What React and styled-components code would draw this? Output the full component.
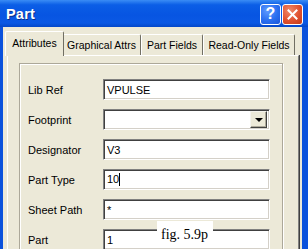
import React from 'react'
import styled, { createGlobalStyle } from 'styled-components'

const GlobalStyle = createGlobalStyle`
  html, body {
    margin: 0;
    padding: 0;
    background: #fff;
  }
  body {
    width: 308px;
    height: 249px;
    overflow: hidden;
    font-family: "Liberation Sans", Arial, sans-serif;
  }
`

const Window = styled.div`
  position: relative;
  width: 308px;
  height: 249px;
  display: flex;
  flex-direction: column;
  overflow: hidden;
`

const TitleBar = styled.div`
  height: 27px;
  flex: none;
  display: flex;
  align-items: center;
  justify-content: space-between;
  padding: 0 5px 0 6px;
  background: linear-gradient(180deg, #3a8cf5 0%, #0b5ee6 18%, #0755e2 55%, #0a58e4 85%, #0447c8 100%);
  color: #fff;
`

const Title = styled.span`
  font-weight: 700;
  font-size: 14.5px;
  text-shadow: 1px 1px 0 #0a2f8a;
  letter-spacing: 0.2px;
`

const Controls = styled.div`
  display: flex;
  gap: 1px;
  margin-top: 1px;
`

const CtrlButton = styled.div`
  width: 21px;
  height: 21px;
  box-sizing: border-box;
  border: 1px solid #fff;
  border-radius: 3px;
  display: flex;
  align-items: center;
  justify-content: center;
  color: #fff;
  font-weight: 700;
  font-size: 16px;
  background: ${(p) =>
    p.$close
      ? 'radial-gradient(circle at 35% 30%, #f08a6a 0%, #e0512f 55%, #c23a18 100%)'
      : 'radial-gradient(circle at 35% 30%, #5f9bff 0%, #2a6ff0 55%, #1a55d8 100%)'};
`

const Body = styled.div`
  flex: 1;
  display: flex;
  flex-direction: column;
  background: #ece9d8;
  border-left: 3px solid #0b52dc;
  border-right: 6px solid #0b52dc;
  padding: 4px 2px 0 4px;
  min-height: 0;
`

const TabStrip = styled.div`
  display: flex;
  align-items: flex-end;
  height: 24px;
  flex: none;
  position: relative;
  z-index: 1;
`

const Tab = styled.div`
  box-sizing: border-box;
  width: ${(p) => p.$w}px;
  height: ${(p) => (p.$active ? 25 : 21)}px;
  margin: ${(p) => (p.$active ? '0 -2px -1px -2px' : '0')};
  padding-top: ${(p) => (p.$active ? 5 : 4)}px;
  background: #ece9d8;
  border-top: 1px solid #fff;
  border-left: 1px solid #fff;
  border-right: 1px solid #716f64;
  border-top-left-radius: 2px;
  border-top-right-radius: 2px;
  font-size: 10.5px;
  line-height: 13px;
  color: #000;
  text-align: center;
  white-space: nowrap;
  position: relative;
  z-index: ${(p) => (p.$active ? 2 : 1)};
`

const Panel = styled.div`
  flex: 1;
  border-top: 1px solid #fff;
  border-left: 1px solid #fff;
  border-right: 1px solid #808080;
  box-shadow: 1px 0 0 #404040;
  margin-right: 1px;
  padding: 7px 15px 0 11px;
  min-height: 0;
`

const Group = styled.div`
  border: 1px solid #aca899;
  box-shadow: inset 1px 1px 0 #fff, 1px 1px 0 #fff;
  border-bottom: none;
  height: 100%;
  box-sizing: border-box;
  padding: 15px 12px 0 8px;
  display: grid;
  grid-auto-rows: 21px;
  row-gap: 9px;
  align-content: start;
`

const Row = styled.div`
  display: grid;
  grid-template-columns: 75px 1fr;
  align-items: center;
`

const Label = styled.span`
  font-size: 11px;
  color: #000;
`

const Field = styled.div`
  height: 21px;
  box-sizing: border-box;
  background: #fff;
  border-top: 1px solid #808080;
  border-left: 1px solid #808080;
  border-bottom: 1px solid #fff;
  border-right: 1px solid #fff;
  box-shadow: inset 1px 1px 0 #404040, inset -1px -1px 0 #d4d0c8;
  padding: 0 2px 0 3px;
  display: flex;
  align-items: center;
  justify-content: space-between;
  font-size: 11px;
  color: #000;
`

const Caret = styled.span`
  display: inline-block;
  width: 1px;
  height: 13px;
  background: #000;
  vertical-align: middle;
  margin-left: 0;
`

const DropButton = styled.div`
  width: 17px;
  height: 17px;
  box-sizing: border-box;
  background: #ece9d8;
  border-top: 1px solid #f4f3ee;
  border-left: 1px solid #f4f3ee;
  border-right: 1px solid #404040;
  border-bottom: 1px solid #404040;
  box-shadow: inset -1px -1px 0 #aca899;
  display: flex;
  align-items: center;
  justify-content: center;
`

const Arrow = styled.span`
  width: 0;
  height: 0;
  border-left: 4px solid transparent;
  border-right: 4px solid transparent;
  border-top: 4px solid #000;
`

const FigNote = styled.div`
  position: absolute;
  left: 157px;
  top: 221px;
  width: 56px;
  height: 24px;
  box-sizing: border-box;
  padding: 6px 0 0 4px;
  background: #fff;
  font-family: "Liberation Serif", "Times New Roman", serif;
  font-size: 14px;
  line-height: 16px;
  color: #000;
`

const tabs = [
  { name: 'Attributes', w: 59, active: true },
  { name: 'Graphical Attrs', w: 79 },
  { name: 'Part Fields', w: 62 },
  { name: 'Read-Only Fields', w: 92 },
]

const CloseIcon = () => (
  <svg width="11" height="11" viewBox="0 0 11 11">
    <path d="M1.5 1.5 L9.5 9.5 M9.5 1.5 L1.5 9.5" stroke="#fff" strokeWidth="2" strokeLinecap="square" />
  </svg>
)

const App = () => {
  return (
    <>
      <GlobalStyle />
      <Window>
        <TitleBar>
          <Title>Part</Title>
          <Controls>
            <CtrlButton>?</CtrlButton>
            <CtrlButton $close>
              <CloseIcon />
            </CtrlButton>
          </Controls>
        </TitleBar>
        <Body>
          <TabStrip>
            {tabs.map((t) => (
              <Tab key={t.name} $w={t.w} $active={t.active}>
                {t.name}
              </Tab>
            ))}
          </TabStrip>
          <Panel>
            <Group>
              <Row>
                <Label>Lib Ref</Label>
                <Field>VPULSE</Field>
              </Row>
              <Row>
                <Label>Footprint</Label>
                <Field>
                  <span />
                  <DropButton>
                    <Arrow />
                  </DropButton>
                </Field>
              </Row>
              <Row>
                <Label>Designator</Label>
                <Field>V3</Field>
              </Row>
              <Row>
                <Label>Part Type</Label>
                <Field>
                  <span>
                    10<Caret />
                  </span>
                </Field>
              </Row>
              <Row>
                <Label>Sheet Path</Label>
                <Field>*</Field>
              </Row>
              <Row>
                <Label>Part</Label>
                <Field>1</Field>
              </Row>
            </Group>
          </Panel>
        </Body>
        <FigNote>fig. 5.9p</FigNote>
      </Window>
    </>
  )
}

export default App
